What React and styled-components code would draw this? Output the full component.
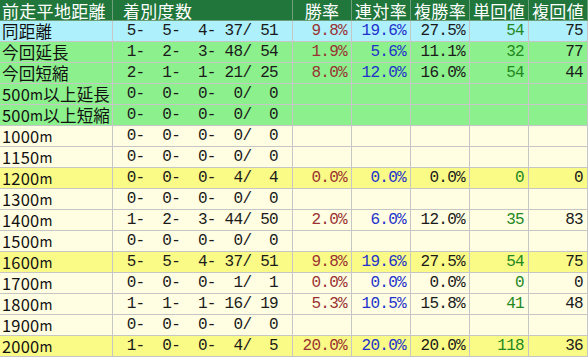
import styled, { createGlobalStyle } from 'styled-components'

const GlobalStyle = createGlobalStyle`
  body {
    margin: 0;
    background: #ffffff;
  }
`

const ROW_BG = {
  head: '#21773b',
  same: '#aef0fc',
  green: '#8cf08c',
  light: '#fffde2',
  hit: '#fafa86',
}

const Table = styled.div`
  display: grid;
  grid-template-columns: 113px 180px 59px 59px 59px 59px 59px;
  grid-auto-rows: 21px;
  width: 588px;
`

const Cell = styled.div`
  box-sizing: border-box;
  display: flex;
  align-items: center;
  justify-content: ${(p) => (p.$left ? 'flex-start' : 'flex-end')};
  padding: ${(p) => (p.$left ? '0 0 0 2px' : '0 4px 0 0')};
  background: ${(p) => ROW_BG[p.$bg]};
  border-right: 1px solid #c6c6c6;
  border-bottom: 1px solid #c6c6c6;
  line-height: 1;
  white-space: pre;
`

const HeadCell = styled(Cell)`
  justify-content: ${(p) => (p.$left ? 'flex-start' : 'center')};
  padding: ${(p) => (p.$indent ? '0 0 0 10px' : p.$left ? '0 0 0 2px' : '0')};
  border-color: #6c9f7a;
  color: #ffffff;
  font-family: 'Noto Sans CJK JP', sans-serif;
  font-size: 17px;
  letter-spacing: 0.3px;
`

const Label = styled(Cell)`
  color: #111111;
  font-family: 'Noto Sans CJK JP', sans-serif;
  font-size: 16.5px;
  letter-spacing: 0.2px;
`

const Num = styled(Cell)`
  padding-right: ${(p) => (p.$wide ? '14px' : '4px')};
  color: ${(p) => p.$color || '#1a1a1a'};
  font-family: 'Liberation Mono', 'Noto Sans CJK JP', monospace;
  font-size: 16px;
  letter-spacing: -0.7px;
`

const Small = styled.span`
  font-size: 14px;
`

const HEAD = ['勝率', '連対率', '複勝率', '単回値', '複回値']
const COLORS = ['#993333', '#2233cc', '#1a1a1a', '#228822', '#1a1a1a']

const rows = [
  ['同距離', 'same', [5, 5, 4, 37, 51], ['9.8%', '19.6%', '27.5%', '54', '75']],
  ['今回延長', 'green', [1, 2, 3, 48, 54], ['1.9%', '5.6%', '11.1%', '32', '77']],
  ['今回短縮', 'green', [2, 1, 1, 21, 25], ['8.0%', '12.0%', '16.0%', '54', '44']],
  ['500m以上延長', 'green', [0, 0, 0, 0, 0], null],
  ['500m以上短縮', 'green', [0, 0, 0, 0, 0], null],
  ['1000m', 'light', [0, 0, 0, 0, 0], null],
  ['1150m', 'light', [0, 0, 0, 0, 0], null],
  ['1200m', 'hit', [0, 0, 0, 4, 4], ['0.0%', '0.0%', '0.0%', '0', '0']],
  ['1300m', 'light', [0, 0, 0, 0, 0], null],
  ['1400m', 'light', [1, 2, 3, 44, 50], ['2.0%', '6.0%', '12.0%', '35', '83']],
  ['1500m', 'light', [0, 0, 0, 0, 0], null],
  ['1600m', 'hit', [5, 5, 4, 37, 51], ['9.8%', '19.6%', '27.5%', '54', '75']],
  ['1700m', 'light', [0, 0, 0, 1, 1], ['0.0%', '0.0%', '0.0%', '0', '0']],
  ['1800m', 'light', [1, 1, 1, 16, 19], ['5.3%', '10.5%', '15.8%', '41', '48']],
  ['1900m', 'light', [0, 0, 0, 0, 0], null],
  ['2000m', 'hit', [1, 0, 0, 4, 5], ['20.0%', '20.0%', '20.0%', '118', '36']],
]

const pad = (n) => String(n).padStart(2, ' ')

// 着別度数 like "5-  5-  4- 37/ 51"
const record = ([a, b, c, d, e]) => `${a}-  ${b}-  ${c}- ${pad(d)}/ ${pad(e)}`

// the half-width "m" is drawn a bit smaller
const renderLabel = (text) => {
  const parts = text.split('m')
  if (parts.length === 1) return text
  return (
    <>
      {parts[0]}
      <Small>m</Small>
      {parts[1]}
    </>
  )
}

const Row = ({ label, bg, rec, vals }) => (
  <>
    <Label $bg={bg} $left>
      {renderLabel(label)}
    </Label>
    <Num $bg={bg} $wide>
      {record(rec)}
    </Num>
    {COLORS.map((color, i) => (
      <Num key={i} $bg={bg} $color={color}>
        {vals ? vals[i] : ''}
      </Num>
    ))}
  </>
)

const App = () => (
  <>
    <GlobalStyle />
    <Table>
      <HeadCell $bg="head" $left>
        前走平地距離
      </HeadCell>
      <HeadCell $bg="head" $left $indent>
        着別度数
      </HeadCell>
      {HEAD.map((h) => (
        <HeadCell key={h} $bg="head">
          {h}
        </HeadCell>
      ))}

      {rows.map(([label, bg, rec, vals]) => (
        <Row key={label} label={label} bg={bg} rec={rec} vals={vals} />
      ))}
    </Table>
  </>
)

export default App
